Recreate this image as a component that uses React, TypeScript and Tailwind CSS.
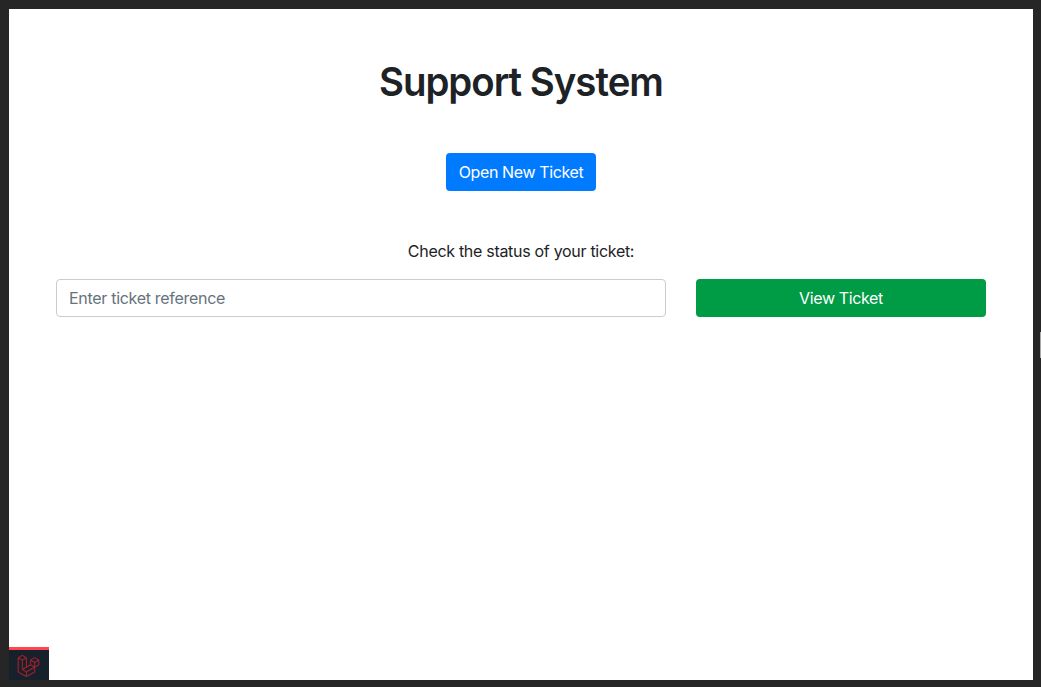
import { FaLaravel } from "react-icons/fa";

function DebugBar() {
  return (
    <button
      aria-label="Open debug bar"
      className="absolute bottom-0 left-0 flex h-[33px] w-10 items-center border-t-[3px] border-[#ff4452] bg-[#17212b] pl-2 pt-px"
    >
      <FaLaravel className="h-[22px] w-[23px] stroke-[#b8222b] stroke-[6] text-[#b8222b]" />
    </button>
  );
}

export default function App() {
  return (
    <div className="relative h-[687px] w-[1041px] overflow-hidden bg-[#262626] pt-[9px] pl-[9px] font-[Inter,sans-serif] text-base text-[#1d2226]">
      <main className="relative flex h-[671px] w-[1024px] flex-col items-center bg-white px-[47px] pt-12">
        <h1 className="h-12 scale-x-[0.96] whitespace-nowrap text-[40px] font-[580] leading-[50px] tracking-[-1.05px]">
          Support System
        </h1>
        <button className="mt-12 h-[38px] w-[150px] rounded-[4px] bg-[#007bff] whitespace-nowrap tracking-[-0.38px] text-white">
          Open New Ticket
        </button>
        <p className="mt-12 h-6 whitespace-nowrap leading-6 tracking-[-0.3px]">
          Check the status of your ticket:
        </p>
        <form className="mt-4 flex w-full gap-[30px]" onSubmit={(e) => e.preventDefault()}>
          <input
            type="text"
            placeholder="Enter ticket reference"
            className="h-[38px] w-[610px] rounded-[4px] border border-[#c5cdd4] px-3 tracking-[-0.3px] placeholder:text-[#66727c]"
          />
          <button className="h-[38px] w-[290px] rounded-[4px] bg-[#009b45] tracking-[-0.36px] text-white">
            View Ticket
          </button>
        </form>
        <DebugBar />
      </main>
      <div className="absolute right-0 top-[332px] h-[26px] w-px bg-[#a8a8a8]" />
    </div>
  );
}
